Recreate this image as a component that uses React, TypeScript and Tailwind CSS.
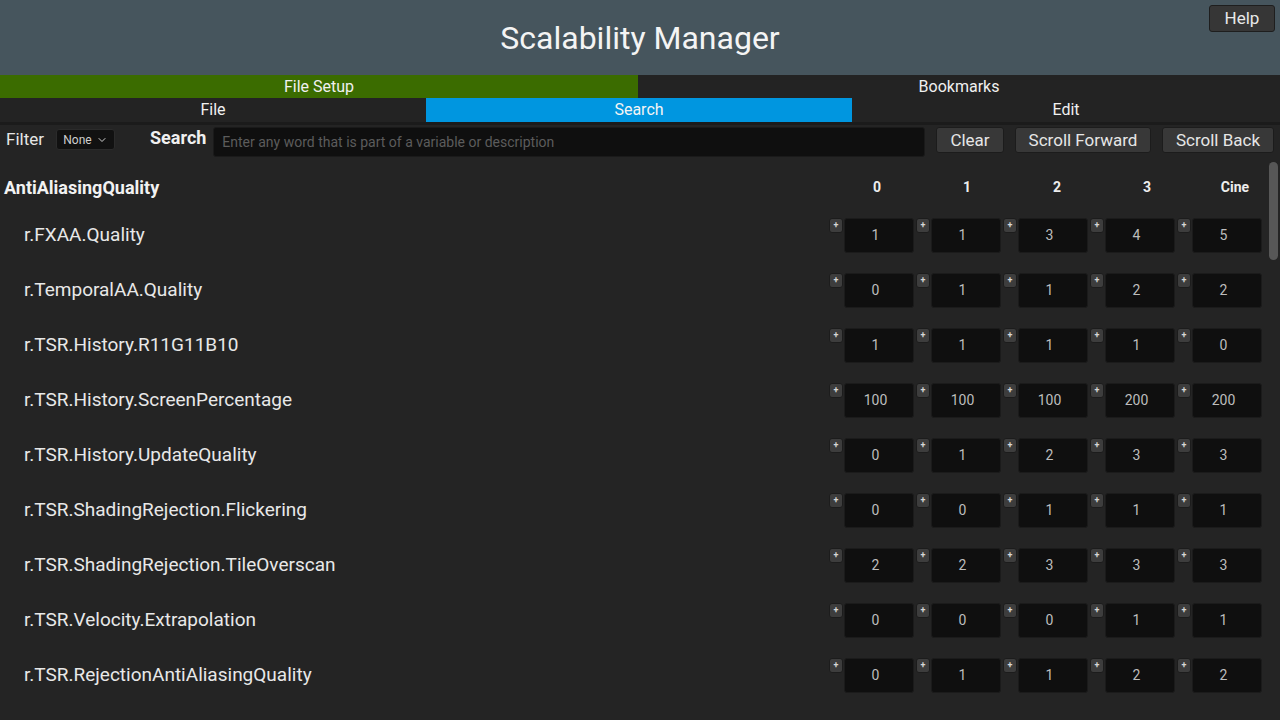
import React from 'react';
import { ChevronDown } from 'lucide-react';

// Scalability values per cvar, one per quality level (0, 1, 2, 3, Cine)
const rows: { name: string; values: string[] }[] = [
  { name: 'r.FXAA.Quality', values: ['1', '1', '3', '4', '5'] },
  { name: 'r.TemporalAA.Quality', values: ['0', '1', '1', '2', '2'] },
  { name: 'r.TSR.History.R11G11B10', values: ['1', '1', '1', '1', '0'] },
  { name: 'r.TSR.History.ScreenPercentage', values: ['100', '100', '100', '200', '200'] },
  { name: 'r.TSR.History.UpdateQuality', values: ['0', '1', '2', '3', '3'] },
  { name: 'r.TSR.ShadingRejection.Flickering', values: ['0', '0', '1', '1', '1'] },
  { name: 'r.TSR.ShadingRejection.TileOverscan', values: ['2', '2', '3', '3', '3'] },
  { name: 'r.TSR.Velocity.Extrapolation', values: ['0', '0', '0', '1', '1'] },
  { name: 'r.TSR.RejectionAntiAliasingQuality', values: ['0', '1', '1', '2', '2'] },
];

const levels = ['0', '1', '2', '3', 'Cine'];

const ToolButton: React.FC<{ label: string; className?: string }> = ({ label, className = '' }) => (
  <button
    className={`h-[26px] bg-[#383838] border border-[#1c1c1c] rounded-[3px] text-[17px] text-[#e6e6e6] leading-none ${className}`}
  >
    {label}
  </button>
);

const ValueCell: React.FC<{ value: string }> = ({ value }) => (
  <div className="flex items-start">
    <button className="w-[14px] h-[15px] bg-[#3d3d3d] border border-[#1c1c1c] rounded-[3px] flex items-center justify-center text-[9px] leading-none text-[#d6d6d6] font-bold">
      +
    </button>
    <div className="ml-[1px] w-[70px] h-[35px] bg-[#0f0f0f] border border-[#1b1b1b] rounded-[3px] flex items-center justify-center pr-[7px] text-[14px] text-[#bdbdbd]">
      {value}
    </div>
  </div>
);

const App: React.FC = () => {
  return (
    <div
      className="w-[1280px] h-[720px] overflow-hidden bg-[#242424] text-white flex flex-col"
      style={{ fontFamily: 'Roboto, "Noto Sans", sans-serif' }}
    >
      {/* Title bar */}
      <header className="relative h-[75px] shrink-0 bg-[#46555d] flex items-center justify-center">
        <h1 className="text-[32px] text-[#f4f4f4]">Scalability Manager</h1>
        <button className="absolute top-[5px] right-[5px] w-[66px] h-[27px] bg-[#363636] border border-[#1e1e1e] rounded-[3px] text-[17px] text-[#e8e8e8] leading-none">
          Help
        </button>
      </header>

      {/* Top tabs */}
      <div className="h-[23px] shrink-0 flex text-[16px] leading-none">
        <div className="w-[638px] bg-[#3b6c00] flex items-center justify-center text-[#f0f0f0]">File Setup</div>
        <div className="flex-1 bg-[#232323] flex items-center justify-center text-[#f0f0f0]">Bookmarks</div>
      </div>

      {/* Sub tabs */}
      <div className="h-[24px] shrink-0 flex text-[16px] leading-none bg-[#232323]">
        <div className="w-[426px] flex items-center justify-center text-[#f0f0f0]">File</div>
        <div className="w-[426px] bg-[#0096e0] flex items-center justify-center text-[#f4f4f4]">Search</div>
        <div className="flex-1 flex items-center justify-center text-[#f0f0f0]">Edit</div>
      </div>
      <div className="h-[3px] shrink-0 bg-[#1b1b1b]" />

      {/* Search row */}
      <div className="h-[35px] shrink-0 flex items-start pt-[2px] bg-[#242424]">
        <span className="ml-[6px] mt-[4px] text-[17px] text-[#e6e6e6] leading-none">Filter</span>
        <div className="ml-[12px] mt-[2px] w-[59px] h-[21px] bg-[#111111] border border-[#2b2b2b] rounded-[3px] flex items-center justify-center gap-[4px] text-[12px] text-[#cfcfcf]">
          None
          <ChevronDown size={12} strokeWidth={2} className="text-[#cfcfcf]" />
        </div>
        <span className="ml-[35px] mt-[2px] text-[18px] font-bold text-[#f0f0f0] leading-none">Search</span>
        <div className="ml-[7px] w-[712px] h-[30px] bg-[#0f0f0f] border border-[#1a1a1a] rounded-[3px] flex items-center px-[8px] text-[14px] text-[#5c5c5c]">
          Enter any word that is part of a variable or description
        </div>
        <div className="ml-auto mr-[6px] flex gap-[11px]">
          <ToolButton label="Clear" className="w-[68px]" />
          <ToolButton label="Scroll Forward" className="w-[136px]" />
          <ToolButton label="Scroll Back" className="w-[112px]" />
        </div>
      </div>

      {/* Results */}
      <div className="relative flex-1 overflow-hidden">
        <div className="h-[54px] flex items-center">
          <span className="pl-[4px] text-[18px] font-bold text-[#f2f2f2]">AntiAliasingQuality</span>
          <div className="ml-auto mr-[2px] flex text-[14px] font-bold text-[#ededed]">
            {levels.map((l, i) => (
              <div key={l} className={`${i === 4 ? 'w-[86px]' : 'w-[90px]'} text-center`}>
                {l}
              </div>
            ))}
          </div>
        </div>

        {rows.map((row) => (
          <div key={row.name} className="h-[55px] flex items-start pt-[4px]">
            <div className="h-[35px] flex items-center pl-[24px] text-[19px] text-[#e8e8e8]">{row.name}</div>
            <div className="ml-auto pr-[18px] flex gap-[2px]">
              {row.values.map((v, i) => (
                <ValueCell key={i} value={v} />
              ))}
            </div>
          </div>
        ))}

        {/* Scrollbar thumb */}
        <div className="absolute top-[2px] right-[2px] w-[9px] h-[98px] rounded-full bg-[#575757]" />
      </div>
    </div>
  );
};

export default App;
